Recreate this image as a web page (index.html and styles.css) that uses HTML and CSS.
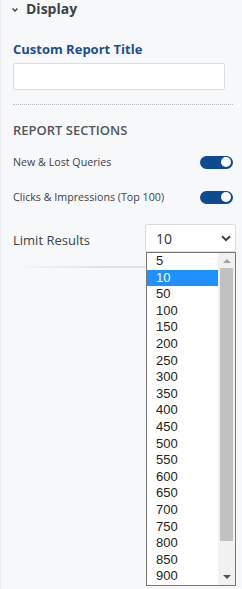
FILE: index.html
```html
<!DOCTYPE html>
<html lang="en">
<head>
    <meta charset="UTF-8">
    <meta name="viewport" content="width=device-width, initial-scale=1.0">
    <title>Display Settings</title>
    <link rel="stylesheet" href="styles.css">
</head>
<body>
    <div class="panel">
        <!-- Panel header -->
        <div class="panel-head">
            <svg class="head-chevron" width="6" height="4" viewBox="0 0 6 4">
                <path d="M0.6 0.6 L3 3 L5.4 0.6" fill="none" stroke="#3c434a" stroke-width="1.4"/>
            </svg>
            <span>Display</span>
        </div>

        <!-- Report title -->
        <label class="field-label" for="report-title">Custom Report Title</label>
        <input class="text-input" type="text" id="report-title">

        <div class="dotted"></div>

        <!-- Sections -->
        <div class="section-title">REPORT SECTIONS</div>

        <div class="toggle-row">
            <span>New &amp; Lost Queries</span>
            <span class="toggle"><span class="knob"></span></span>
        </div>
        <div class="toggle-row second">
            <span>Clicks &amp; Impressions (Top 100)</span>
            <span class="toggle"><span class="knob"></span></span>
        </div>

        <!-- Limit select with its open list -->
        <div class="limit-row">
            <span class="limit-label">Limit Results</span>
            <div class="select-wrap">
                <div class="select">
                    <span>10</span>
                    <svg width="10" height="7" viewBox="0 0 10 7">
                        <path d="M1 1.2 L5 5 L9 1.2" fill="none" stroke="#3c434a" stroke-width="2"/>
                    </svg>
                </div>
                <div class="dropdown">
                    <ul class="options">
                        <li>5</li>
                        <li class="selected">10</li>
                        <li>50</li>
                        <li>100</li>
                        <li>150</li>
                        <li>200</li>
                        <li>250</li>
                        <li>300</li>
                        <li>350</li>
                        <li>400</li>
                        <li>450</li>
                        <li>500</li>
                        <li>550</li>
                        <li>600</li>
                        <li>650</li>
                        <li>700</li>
                        <li>750</li>
                        <li>800</li>
                        <li>850</li>
                        <li>900</li>
                    </ul>
                    <div class="scrollbar">
                        <span class="arrow up"></span>
                        <span class="thumb"></span>
                        <span class="arrow down"></span>
                    </div>
                </div>
            </div>
        </div>

        <div class="fade-line"></div>
    </div>
</body>
</html>
```

FILE: styles.css
```css
/* Reset */
body, ul {
    margin: 0;
    padding: 0;
}

body {
    font-family: 'Open Sans', sans-serif;
    background-color: #f7f8fa;
    color: #3c434a;
    height: 589px;
    border-left: 1px solid #eceef1;
}

.panel {
    padding: 0 9px 0 12px;
}

/* Header */
.panel-head {
    display: flex;
    align-items: center;
    height: 18px;
    font-size: 14px;
    line-height: 18px;
    font-weight: 700;
    color: #3c434a;
}

.head-chevron {
    margin: 1px 8px 0 -1px;
}

/* Title field */
.field-label {
    display: block;
    margin-top: 23px;
    font-size: 13px;
    line-height: 16px;
    font-weight: 700;
    color: #1f4e8c;
}

.text-input {
    display: block;
    box-sizing: border-box;
    width: 212px;
    height: 27px;
    margin-top: 6px;
    border: 1px solid #dcdcde;
    border-radius: 2px;
    background-color: #fff;
}

.dotted {
    margin-top: 14px;
    border-top: 1px dotted #b8bcc2;
}

/* Sections */
.section-title {
    margin-top: 17px;
    font-size: 13px;
    line-height: 16px;
    font-weight: 600;
    color: #50575e;
}

.toggle-row {
    display: flex;
    justify-content: space-between;
    align-items: center;
    margin-top: 18px;
    height: 13px;
    font-size: 10.7px;
    line-height: 12px;
}

.toggle-row span:first-child {
    position: relative;
    top: -1px;
}

.toggle-row.second {
    margin-top: 22px;
}

.toggle {
    display: flex;
    justify-content: flex-end;
    align-items: center;
    box-sizing: border-box;
    width: 33px;
    height: 13px;
    padding-right: 2px;
    border-radius: 7px;
    background-color: #0e4a8e;
}

.knob {
    width: 10px;
    height: 10px;
    border-radius: 50%;
    background-color: #fff;
}

/* Limit results */
.limit-row {
    display: flex;
    justify-content: space-between;
    align-items: center;
    margin-top: 20px;
    margin-right: -3px;
}

.limit-label {
    font-size: 13px;
    padding-top: 4px;
}

.select-wrap {
    position: relative;
    width: 91px;
}

.select {
    display: flex;
    justify-content: space-between;
    align-items: center;
    box-sizing: border-box;
    height: 28px;
    padding: 0 4px 0 10px;
    border: 1px solid #dcdcde;
    border-radius: 2px;
    background-color: #fff;
    font-size: 14px;
    color: #2c3338;
}

/* Open option list drawn over the page */
.dropdown {
    position: absolute;
    top: 28px;
    left: 1px;
    z-index: 2;
    display: flex;
    box-sizing: border-box;
    width: 90px;
    height: 334px;
    border: 1px solid #767676;
    background-color: #fff;
    overflow: hidden;
}

.options {
    flex: 1;
    list-style: none;
    font-family: 'Liberation Sans', Arial, sans-serif;
    font-size: 13px;
    color: #222;
}

.options li {
    height: 16.6px;
    line-height: 16.6px;
    padding-left: 9px;
}

.options li.selected {
    background-color: #1e90ff;
    color: #fff;
}

.scrollbar {
    display: flex;
    flex-direction: column;
    align-items: center;
    width: 17px;
    background-color: #f1f1f1;
}

.thumb {
    width: 13px;
    height: 273px;
    margin-bottom: auto;
    background-color: #c1c1c1;
}

.arrow {
    width: 0;
    height: 0;
    border-left: 4px solid transparent;
    border-right: 4px solid transparent;
}

.arrow.up {
    margin: 6px 0 5px;
    border-bottom: 4px solid #a3a3a3;
}

.arrow.down {
    margin: 0 0 6px;
    border-top: 4px solid #505050;
}

.fade-line {
    height: 2px;
    margin: 14px -3px 0 -12px;
    background: linear-gradient(90deg, rgba(224, 225, 228, 0) 4%, #e0e1e4 45%);
}
```
